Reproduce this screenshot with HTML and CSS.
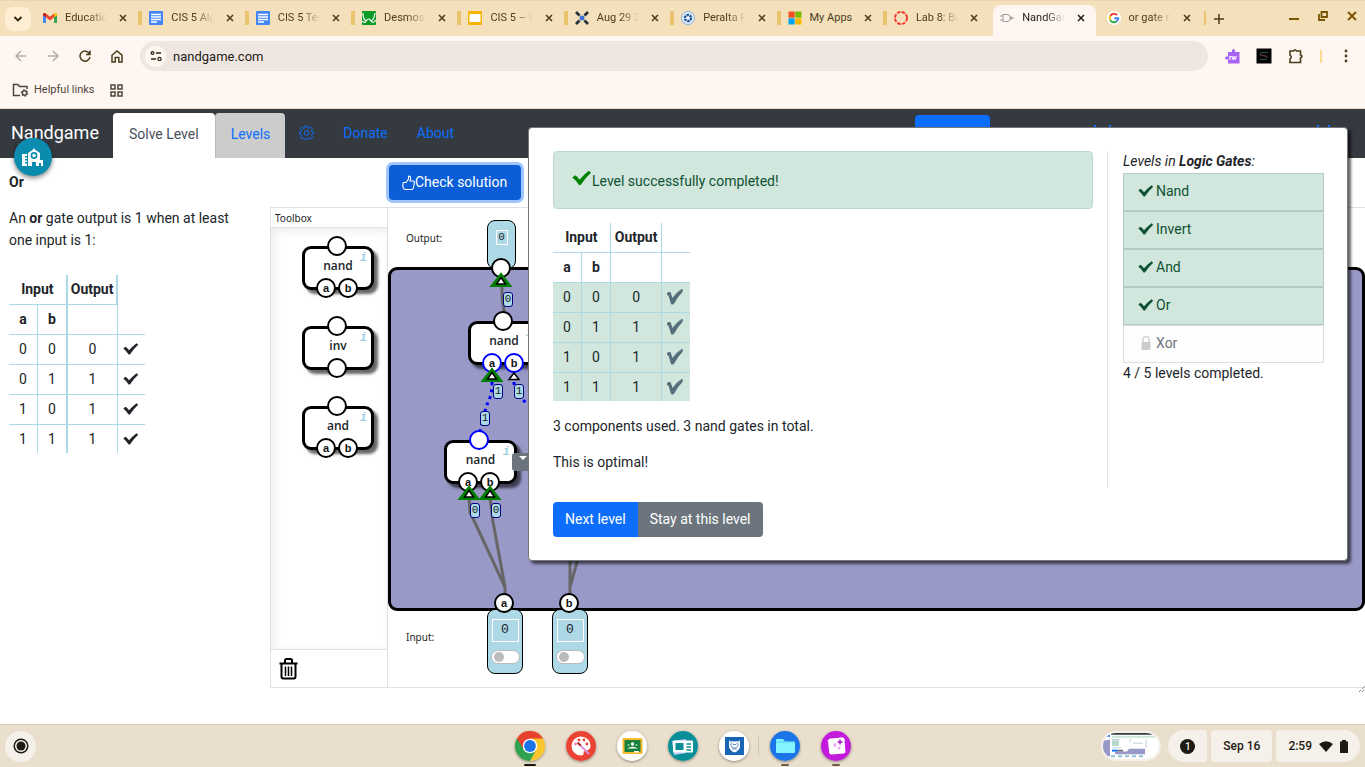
FILE: index.html
```html
<!DOCTYPE html>
<html lang="en">
<head>
<meta charset="utf-8">
<title>NandGame</title>
<link rel="stylesheet" href="styles.css">
</head>
<body>
<svg class="defs" aria-hidden="true">
  <symbol id="x" viewBox="0 0 8 8"><path d="M1 1l6 6M7 1l-6 6" stroke="currentColor" stroke-width="1.5" fill="none"/></symbol>
  <symbol id="check" viewBox="0 0 16 12"><path d="M.3 5.500L2.500 3.800Q4.500 5 6 7.300Q9.500 3.300 13.500 .2L15.200 1.800Q10.500 6 6.900 11.500L5.600 11.500Q3.500 8 .3 5.500Z" fill="currentColor"/></symbol>
  <symbol id="mark" viewBox="0 0 16 16"><path d="M0 4Q1.500 2.500 3.500 3L5.500 9Q9.500 3 14.500 0L16 .5L15.500 3Q10.500 8 7.500 14Q6 16.500 4 15L1.800 7.500Q1.200 5.500 0 6Z" fill="#546e7a"/><path d="M6.500 8Q10 3 15 .7" stroke="#7b93a0" stroke-width=".7" fill="none"/></symbol>
  <symbol id="doc" viewBox="0 0 14 14"><rect width="14" height="14" rx="1" fill="#4285f4"/><path d="M2 3.500h10M2 6h10M2 8.500h10M2 11h6" stroke="#fff" stroke-width="1.300"/></symbol>
  <symbol id="tri" viewBox="0 0 24 17"><path d="M12 4L20 14.300H4Z" fill="#fff" stroke="green" stroke-width="3.500"/><path d="M12 6.500L16.500 13H7.500Z" fill="#fff" stroke="#000" stroke-width="1.500"/></symbol>
</svg>

<header class="browser">
  <div class="tabstrip">
    <button class="tab-search" aria-label="Search tabs"><svg width="10" height="6" viewBox="0 0 10 6"><path d="M1.500 1l3.500 3.500L8.500 1" fill="none" stroke="#2b2412" stroke-width="1.800"/></svg></button>
    <div class="tabs">
      <div class="tab"><svg class="fav" viewBox="0 0 14 14"><path d="M0 12V3l3 2.500V12z" fill="#4285f4"/><path d="M14 12V3l-3 2.500V12z" fill="#34a853"/><path d="M3 2.500L7 5.700l4-3.200v3.700L7 9.500 3 6.200z" fill="#ea4335"/><path d="M0 3.200Q.2 1 3 2.500v3.700L0 4.500z" fill="#c5221f"/><path d="M14 3.200Q13.800 1 11 2.500v3.700l3-1.700z" fill="#fbbc04"/></svg><span class="tab-title">Education</span><button class="close" aria-label="Close"><svg width="8" height="8"><use href="#x"/></svg></button></div>
      <div class="tab"><svg class="fav"><use href="#doc"/></svg><span class="tab-title">CIS 5 Algorithms</span><button class="close" aria-label="Close"><svg width="8" height="8"><use href="#x"/></svg></button></div>
      <div class="tab"><svg class="fav"><use href="#doc"/></svg><span class="tab-title">CIS 5 Terms</span><button class="close" aria-label="Close"><svg width="8" height="8"><use href="#x"/></svg></button></div>
      <div class="tab"><svg class="fav" viewBox="0 0 14 14"><rect width="14" height="14" rx="1" fill="#0a9a25"/><path d="M1 2Q1 8 4 10Q7 6 9 10Q12 9 13 2M0 10Q3 13 4 10M9 10Q11 13 14 9" fill="none" stroke="#fff" stroke-width="1.200"/></svg><span class="tab-title">Desmos</span><button class="close" aria-label="Close"><svg width="8" height="8"><use href="#x"/></svg></button></div>
      <div class="tab"><svg class="fav" viewBox="0 0 14 14"><rect width="14" height="14" rx="1" fill="#f6b400"/><rect x="1.500" y="3" width="11" height="8" fill="#fff"/></svg><span class="tab-title">CIS 5 – 9/16</span><button class="close" aria-label="Close"><svg width="8" height="8"><use href="#x"/></svg></button></div>
      <div class="tab"><svg class="fav" viewBox="0 0 14 14"><path d="M1 1l3.500 3.500M13 1L9.500 4.500M1 13l3.500-3.500M13 13L9.500 9.500" stroke="#27313f" stroke-width="2.800"/><path d="M4 4l6 6M10 4l-6 6" stroke="#6b7280" stroke-width="1"/><circle cx="7" cy="7" r="2.500" fill="#3f73d8"/></svg><span class="tab-title">Aug 29 3:00</span><button class="close" aria-label="Close"><svg width="8" height="8"><use href="#x"/></svg></button></div>
      <div class="tab"><svg class="fav" viewBox="0 0 14 14"><circle cx="7" cy="7" r="6.600" fill="#dce9f7" stroke="#7fa9d8" stroke-width=".8"/><circle cx="7" cy="7" r="3" fill="#fff" stroke="#174f99" stroke-width="2.400" stroke-dasharray="2.300 .8"/></svg><span class="tab-title">Peralta Portal</span><button class="close" aria-label="Close"><svg width="8" height="8"><use href="#x"/></svg></button></div>
      <div class="tab"><svg class="fav" viewBox="0 0 14 14"><path d="M.5 .5H6.700V6.700H.5z" fill="#f25022"/><path d="M7.300 .5h6.200v6.200H7.300z" fill="#7fba00"/><path d="M.5 7.300h6.200v6.200H.5z" fill="#00a4ef"/><path d="M7.300 7.300h6.200v6.200H7.300z" fill="#ffb900"/></svg><span class="tab-title whole">My Apps</span><button class="close" aria-label="Close"><svg width="8" height="8"><use href="#x"/></svg></button></div>
      <div class="tab no-sep"><svg class="fav" viewBox="0 0 14 14"><circle cx="7" cy="7" r="6" fill="none" stroke="#f0342c" stroke-width="1.900" stroke-dasharray="3.500 1.200"/></svg><span class="tab-title">Lab 8: Binary</span><button class="close" aria-label="Close"><svg width="8" height="8"><use href="#x"/></svg></button></div>
      <div class="tab no-sep active"><svg class="fav" viewBox="0 0 14 14"><path d="M3 3.500h4a3.500 3.500 0 010 7H3zM0 5h3M0 9h3M11 7h3" fill="none" stroke="#999" stroke-width="1"/><circle cx="11" cy="7" r="1" fill="none" stroke="#999"/></svg><span class="tab-title">NandGame</span><button class="close" aria-label="Close"><svg width="8" height="8"><use href="#x"/></svg></button></div>
      <div class="tab"><svg class="fav" viewBox="0 0 14 14"><circle cx="7" cy="7" r="7" fill="#fff"/><g fill="none" stroke-width="2"><path d="M10.200 4.100A4.300 4.300 0 003.300 4.900" stroke="#ea4335"/><path d="M3.300 4.900A4.300 4.300 0 003.300 9.200" stroke="#fbbc05"/><path d="M3.300 9.200A4.300 4.300 0 009.700 10.300" stroke="#34a853"/><path d="M9.700 10.300A4.300 4.300 0 0011.200 7.200H7.200" stroke="#4285f4"/></g></svg><span class="tab-title">or gate nand</span><button class="close" aria-label="Close"><svg width="8" height="8"><use href="#x"/></svg></button></div>
    </div>
    <button class="icon-btn" aria-label="New tab"><svg width="10" height="10"><path d="M5 0v10M0 5h10" stroke="#4b3d1c" stroke-width="1.500"/></svg></button>
    <div class="window-controls">
      <button class="icon-btn" aria-label="Minimize"><svg width="10" height="10"><path d="M0 8h10" stroke="#7a5600" stroke-width="2"/></svg></button>
      <button class="icon-btn" aria-label="Restore"><svg width="10" height="10"><path d="M3.500 1h5.500v5H3.500zM1 3v6h6" fill="none" stroke="#7a5600" stroke-width="1.800"/></svg></button>
      <button class="icon-btn" aria-label="Close window"><svg width="10" height="10"><path d="M1 1l8 8M9 1L1 9" stroke="#7a5600" stroke-width="1.900"/></svg></button>
    </div>
  </div>
  <div class="toolbar">
    <button class="icon-btn" aria-label="Back"><svg width="12" height="12"><path d="M11 6H1.500M6 1L1 6l5 5" fill="none" stroke="#b5aba4" stroke-width="1.500"/></svg></button>
    <button class="icon-btn" aria-label="Forward"><svg width="12" height="12"><path d="M1 6h9.500M6 1l5 5-5 5" fill="none" stroke="#b5aba4" stroke-width="1.500"/></svg></button>
    <button class="icon-btn" aria-label="Reload"><svg width="12" height="12"><path d="M10.300 3.500A5 5 0 1011 6.800M11 .5v4H7" fill="none" stroke="#4b3d1c" stroke-width="1.500"/></svg></button>
    <button class="icon-btn" aria-label="Home"><svg width="12" height="13"><path d="M1 5.200L6 1l5 4.200V12H7.800V7.500H4.200V12H1z" fill="none" stroke="#4b3d1c" stroke-width="1.500"/></svg></button>
    <label class="omnibox"><span class="site"><svg width="12" height="10"><path d="M6 2h5M1 8h5" stroke="#2b2412" stroke-width="1.400"/><circle cx="2.500" cy="2" r="1.400" fill="none" stroke="#2b2412" stroke-width="1.200"/><circle cx="9.500" cy="8" r="1.600" fill="none" stroke="#2b2412" stroke-width="1.200"/></svg></span><input type="text" value="nandgame.com" aria-label="Address"></label>
    <div class="extensions">
      <button class="icon-btn" aria-label="Read and write"><svg width="16" height="16"><path d="M4 4h4V2.500a1.500 1.500 0 113 0V4h4.500v11.500H4v-4H2.500a1.500 1.500 0 110-3H4z" fill="#a862f5"/><text x="5" y="12" class="rw">rw</text></svg></button>
      <button class="icon-btn" aria-label="Extension"><svg width="16" height="16"><rect x=".5" y=".5" width="15" height="15" fill="#050505"/><path d="M12 4.500H5l-1 2 7 2-1 3H4" fill="none" stroke="#2c4c4e"/><path d="M4 7l7 1.500" stroke="#6a2a34"/></svg></button>
      <button class="icon-btn" aria-label="Extensions"><svg width="16" height="16"><path d="M2 3h3.500q1.500-2.500 3 0H12.500v4q3 1 0 3v4.500H2V11q2.500-2 0-4z" fill="none" stroke="#4b3d1c" stroke-width="1.600"/></svg></button>
      <span class="divider"></span>
      <button class="icon-btn" aria-label="Menu"><svg width="16" height="16"><g fill="#4b3d1c"><circle cx="8" cy="3" r="1.400"/><circle cx="8" cy="8" r="1.400"/><circle cx="8" cy="13" r="1.400"/></g></svg></button>
    </div>
  </div>
  <div class="bookmarks">
    <a href="#"><svg width="17" height="14"><path d="M8 12.500H1.500V1.500H6L7.500 3.500H15V6" fill="none" stroke="#4b4639" stroke-width="1.500"/><circle cx="12.500" cy="10" r="2.200" fill="none" stroke="#4b4639" stroke-width="1.500"/><circle cx="12.500" cy="10" r="3.400" fill="none" stroke="#4b4639" stroke-width="1" stroke-dasharray="1.500 2.060"/></svg>Helpful links</a>
    <button class="icon-btn" aria-label="Apps"><svg width="13" height="13"><path d="M1 1h4v4H1zM8 1h4v4H8zM1 8h4v4H1zM8 8h4v4H8z" fill="none" stroke="#4b4639" stroke-width="1.500"/></svg></button>
  </div>
</header>

<nav class="navbar">
  <a class="brand" href="#">Nandgame</a>
  <a class="nav-tab current" href="#">Solve Level</a>
  <a class="nav-tab other" href="#">Levels</a>
  <a class="nav-link gear" href="#" aria-label="Settings"><svg width="15" height="15" viewBox="0 0 15 15" fill="none" stroke="#0d6efd"><path d="M6.300 1h2.400l.4 1.800 1.200.5 1.600-1 1.600 1.600-1 1.600.5 1.200 1.500.3v2l-1.500.4-.5 1.200 1 1.600-1.600 1.600-1.600-1-1.200.5-.4 1.500H6.300l-.4-1.500-1.200-.5-1.600 1-1.600-1.600 1-1.600L2 9.400.5 9V7L2 6.700l.5-1.200-1-1.600 1.600-1.600 1.600 1 1.200-.5z"/><circle cx="7.500" cy="7.800" r="2.300"/></svg></a>
  <a class="nav-link" href="#">Donate</a>
  <a class="nav-link" href="#">About</a>
  <div class="nav-right"><button class="nav-cta" aria-label="Account"></button><svg class="nav-marks" width="240" height="2"><path d="M0 1h2M15 1h2M223 1h2M234 1h2" stroke="#0d6efd" stroke-width="2"/></svg></div>
  <button class="helper" aria-label="School tools"><svg width="22" height="19" viewBox="0 0 22 19"><path d="M0 6h5v2H3v1.500h2v1.500H3v1.500h2V14H3v1.500h2V18H0z" fill="#fff"/><path d="M6 18V5L10.500 2L12 0l1.500 2L18 5v7h3v6h-2v-3h-2v3h-3v-4h-4v4z" fill="#fff"/><circle cx="12" cy="7.500" r="2.600" fill="#fff" stroke="#0b8bad" stroke-width="1.600"/></svg></button>
</nav>

<main class="main">
  <section class="lesson">
    <h1>Or</h1>
    <p>An <b>or</b> gate output is 1 when at least one input is 1:</p>
    <table class="truth thick">
      <tr><th colspan="2">Input</th><th>Output</th><td class="blank"></td></tr>
      <tr><th>a</th><th>b</th><th></th><td></td></tr>
      <tr><td>0</td><td>0</td><td>0</td><td><svg width="16" height="12"><use href="#check"/></svg></td></tr>
      <tr><td>0</td><td>1</td><td>1</td><td><svg width="16" height="12"><use href="#check"/></svg></td></tr>
      <tr><td>1</td><td>0</td><td>1</td><td><svg width="16" height="12"><use href="#check"/></svg></td></tr>
      <tr><td>1</td><td>1</td><td>1</td><td><svg width="16" height="12"><use href="#check"/></svg></td></tr>
    </table>
  </section>

  <section class="work">
    <div class="actions"><button class="btn check-btn"><svg width="13" height="16" viewBox="0 0 13 16"><path d="M1.500 7.500H4L6.500 4V1.200Q9 .8 8.500 4L8 6h3.200q1.300.2 1.200 1.500l-1 5.500q-.3 1.500-1.800 1.500H3.500q-2 0-2.500-2.500Q.5 9 1.500 7.500z" fill="none" stroke="#fff" stroke-width="1.100"/></svg>Check solution</button></div>
    <div class="workspace">
      <aside class="toolbox">
        <div class="tb-title">Toolbox</div>
        <div class="tb-body">
          <div class="gate"><span class="pin top"></span>nand<i>i</i><span class="pin left">a</span><span class="pin right">b</span></div>
          <div class="gate"><span class="pin top"></span>inv<i>i</i><span class="pin mid"></span></div>
          <div class="gate"><span class="pin top"></span>and<i>i</i><span class="pin left">a</span><span class="pin right">b</span></div>
        </div>
        <div class="tb-trash"><button class="icon-btn" aria-label="Delete"><svg width="19" height="22" viewBox="0 0 19 22"><path d="M.5 5.500h18M6 5V2.500q0-1.500 1.500-1.500h4Q13 1 13 2.500V5M2.500 6v12.500q0 2 2 2h10q2 0 2-2V6" fill="none" stroke="#000" stroke-width="2"/><path d="M6.500 8.500v9.500M9.500 8.500v9.500M12.500 8.500v9.500" stroke="#000" stroke-width="1.500"/></svg></button></div>
      </aside>
      <div class="canvas">
        <div class="band band-out">Output:</div>
        <div class="board"></div>
        <div class="band band-in">Input:</div>
        <svg class="layer">
          <g transform="translate(-388 -208)" fill="none" stroke="#666" stroke-width="3">
            <path d="M502 286v12l2 12v11M469 498l1 14 35 75v12M490 498l3 24 12 65M570 555v44M579 555l-9 32"/>
            <path d="M492 382q0 13-4 20-5 14-8 30M514 382q0 12 14 22" stroke="#00f" stroke-dasharray="3 4"/>
          </g>
        </svg>
        <div class="terminal out"><span class="value">0</span></div>
        <span class="pin pin-out"></span>
        <div class="gate gate-1"><span class="pin top"></span>nand<i>i</i><span class="pin left on">a</span><span class="pin right on">b</span></div>
        <div class="gate gate-2"><span class="pin top on"></span>nand<i>i</i><span class="pin left">a</span><span class="pin right">b</span></div>
        <div class="terminal in-a"><span class="value">0</span><input type="checkbox" aria-label="Input a"></div>
        <div class="terminal in-b"><span class="value">0</span><input type="checkbox" aria-label="Input b"></div>
        <span class="pin pin-a">a</span>
        <span class="pin pin-b">b</span>
        <svg class="layer">
          <g transform="translate(-388 -208)">
            <use href="#tri" x="489" y="271" width="24" height="17"/>
            <use href="#tri" x="480" y="366" width="24" height="17"/>
            <use href="#tri" x="457" y="484" width="24" height="17"/>
            <use href="#tri" x="478" y="484" width="24" height="17"/>
            <path d="M514 373l5 6.500h-10z" fill="#fff" stroke="#000" stroke-width="1.500"/>
          </g>
        </svg>
        <span class="bit b1">0</span>
        <span class="bit b2">1</span>
        <span class="bit b3">1</span>
        <span class="bit b4">1</span>
        <span class="bit b5">0</span>
        <span class="bit b6">0</span>
        <button class="gate-menu" aria-label="Gate menu"><svg width="8" height="4"><path d="M0 0h8L4 4z" fill="#fff"/></svg></button>
      </div>
    </div>
  </section>
  <svg class="resizer" width="6" height="6"><path d="M0 6l6-6M3 6l3-3" stroke="#444" stroke-dasharray="1 1"/></svg>
</main>

<div class="dialog" role="dialog" aria-label="Level completed">
  <div class="result">
    <div class="alert"><svg width="20" height="16" viewBox="0 0 16 12"><use href="#check"/></svg>Level successfully completed!</div>
    <table class="truth passed">
      <tr><th colspan="2">Input</th><th>Output</th><td></td></tr>
      <tr><th>a</th><th>b</th><th></th><td></td></tr>
      <tr class="ok"><td>0</td><td>0</td><td>0</td><td><svg width="16" height="16"><use href="#mark"/></svg></td></tr>
      <tr class="ok"><td>0</td><td>1</td><td>1</td><td><svg width="16" height="16"><use href="#mark"/></svg></td></tr>
      <tr class="ok"><td>1</td><td>0</td><td>1</td><td><svg width="16" height="16"><use href="#mark"/></svg></td></tr>
      <tr class="ok"><td>1</td><td>1</td><td>1</td><td><svg width="16" height="16"><use href="#mark"/></svg></td></tr>
    </table>
    <p>3 components used. 3 nand gates in total.</p>
    <p>This is optimal!</p>
    <div class="btn-group"><button class="btn primary">Next level</button><button class="btn secondary">Stay at this level</button></div>
  </div>
  <aside class="levels">
    <div><em>Levels in <b>Logic Gates</b>:</em></div>
    <ul>
      <li><svg width="16" height="12"><use href="#check"/></svg>Nand</li>
      <li><svg width="16" height="12"><use href="#check"/></svg>Invert</li>
      <li><svg width="16" height="12"><use href="#check"/></svg>And</li>
      <li><svg width="16" height="12"><use href="#check"/></svg>Or</li>
      <li class="locked"><svg width="16" height="14"><path d="M5 7V3.500q0-3 3-3t3 3V7" fill="none" stroke="#d0d0d0" stroke-width="1.500"/><rect x="3.500" y="6" width="9" height="8" rx="1" fill="#ccc"/></svg>Xor</li>
    </ul>
    <div>4 / 5 levels completed.</div>
  </aside>
</div>

<footer class="shelf">
  <div class="shelf-side"><button class="launcher" aria-label="Launcher"><svg width="16" height="16"><circle cx="8" cy="8" r="6.800" fill="none" stroke="#1d1a12" stroke-width="1.500"/><circle cx="8" cy="8" r="4.500" fill="#1d1a12"/></svg></button></div>
  <div class="apps">
    <button class="app run now" aria-label="Chrome"><svg viewBox="0 0 30 30"><circle cx="15" cy="15" r="15" fill="#fbc52d"/><path d="M15 15L2 7.500A15 15 0 0015 30l6.300-11.400z" fill="#2fa350"/><path d="M2 7.500A15 15 0 0128 7.500H15L8.700 18.600z" fill="#e8402f"/><circle cx="15" cy="15" r="7.300" fill="#fff"/><circle cx="15" cy="15" r="5.900" fill="#1a73e8"/></svg></button>
    <button class="app" aria-label="Canvas"><svg viewBox="0 0 30 30"><circle cx="15" cy="15" r="15" fill="#ea4335"/><path d="M15 5.500a9.500 9.500 0 100 19q3 0 2.500-2.500-.3-2 2-2.300 5-.5 5-4.700 0-8.500-9.500-9.500z" fill="#fff"/><circle cx="9.500" cy="13" r="1.400" fill="#ea7ac4"/><circle cx="13" cy="9" r="1.400" fill="#ea4335"/><circle cx="18" cy="9" r="1.400" fill="#ea4335"/><circle cx="21" cy="13" r="1.400" fill="#ea4335"/><path d="M13 13l10 10" stroke="#e08be0" stroke-width="2"/><path d="M11.500 11.500l3 3" stroke="#b3261e" stroke-width="2"/></svg></button>
    <button class="app" aria-label="Classroom"><svg viewBox="0 0 30 30"><circle cx="15" cy="15" r="15" fill="#fff"/><rect x="5.500" y="7" width="20" height="16" rx="1" fill="#f9bb2d"/><rect x="7.500" y="9" width="16" height="12" fill="#188038"/><circle cx="15.500" cy="13" r="1.700" fill="#fff"/><circle cx="11.500" cy="14" r="1.100" fill="#8fd0a4"/><circle cx="19.500" cy="14" r="1.100" fill="#8fd0a4"/><path d="M10 17.500q5.500-3.500 11 0z" fill="#fff"/><rect x="17" y="20" width="5" height="1.500" fill="#fff"/></svg></button>
    <button class="app" aria-label="Screencast"><svg viewBox="0 0 30 30"><circle cx="15" cy="15" r="15" fill="#0a8f98"/><path d="M4 10l14-2v14l-12 2z" fill="#b9c9f5"/><rect x="5" y="9.500" width="20" height="12" rx="1" fill="#fff"/><rect x="7.500" y="12" width="8" height="7" fill="#0a8f98"/><path d="M18.500 13h4.500M18.500 16h4.500M18.500 19h4.500" stroke="#0a8f98" stroke-width="1.400"/></svg></button>
    <button class="app" aria-label="Securly"><svg viewBox="0 0 30 30"><circle cx="15" cy="15" r="15" fill="#fff"/><rect x="6" y="6" width="19" height="18" fill="#1765b3"/><path d="M10 9.500q5.500 2 11 0v6q-.5 4-5.500 6-5-2-5.500-6z" fill="#fff"/><path d="M11 10.500l3 3h3l3-3M11.500 13l2 4h4l2-4M13.500 19l2-2 2 2" fill="none" stroke="#1765b3" stroke-width=".7"/></svg></button>
    <button class="app run sep" aria-label="Files"><svg viewBox="0 0 30 30"><circle cx="15" cy="15" r="15" fill="#1b74e8"/><path d="M6 9q0-1 1-1h6l2 2.500h9q1 0 1 1V21q0 1-1 1H7q-1 0-1-1z" fill="#82f3ff"/><path d="M6 11h19" stroke="#4fc3ee" stroke-width=".8"/></svg></button>
    <button class="app run" aria-label="Gallery"><svg viewBox="0 0 30 30"><circle cx="15" cy="15" r="15" fill="#c31bdc"/><path d="M6.500 9l14-2.500 2 15-14 1.500z" fill="#f9b7f3"/><rect x="8" y="7" width="16" height="16" rx="2" fill="#fff" transform="rotate(-4 16 15)"/><path d="M19 8.500v5M16.500 11h5" stroke="#a01bc0" stroke-width="1.500"/><path d="M14 12v4M12 14h4M18 15.500v3M16.500 17h3" stroke="#e59af0" stroke-width="1.200"/></svg></button>
  </div>
  <div class="shelf-side status">
    <button class="thumb" aria-label="Recent capture"><svg viewBox="0 0 56 28" preserveAspectRatio="none"><rect width="56" height="28" fill="#fff"/><path d="M8 0h48v2H8z" fill="#35383f"/><path d="M0 8q3 0 7-1v18H0zM26 17h16v6H12v-3h12z" fill="#9797c8"/><path d="M9 3h46v2H9z" fill="#cbe5d7"/><rect x="9" y="8" width="7" height="6" fill="#b5d8cb"/><path d="M9 7h8M30 11h10M43 7v9M27 6v4M9 16h9" stroke="#a9c3cd" stroke-width=".8"/><rect x="3" y="2" width="4" height="2" fill="#0d6efd"/><rect x="9" y="18" width="5" height="2" fill="#0d6efd"/><path d="M14 19h6" stroke="#6c757d" stroke-width="2"/><path d="M8 25h32" stroke="#8fc0d6" stroke-width="2" stroke-dasharray="4 3"/></svg></button>
    <button class="pill first" aria-label="Notifications"><span class="badge">1</span></button>
    <button class="pill">Sep 16</button>
    <button class="pill last">2:59<svg width="14" height="11"><path d="M0 3Q7-2.500 14 3L7 11z" fill="#1d1a12"/></svg><svg width="8" height="13"><path d="M2 0h4v1.500h2V13H0V1.500h2z" fill="#1d1a12"/></svg></button>
  </div>
</footer>
</body>
</html>
```
FILE: styles.css
```css
* { box-sizing: border-box; }
body {
  margin: 0;
  min-height: 100vh;
  display: flex;
  flex-direction: column;
  position: relative;
  font: 14px/22px Roboto, sans-serif;
  color: #212529;
  background: #fff;
}
button { font: inherit; border: 0; padding: 0; background: none; color: inherit; }
a { text-decoration: none; color: #0d6efd; }
svg { display: block; flex: none; }
.defs { position: absolute; width: 0; height: 0; }

/* Browser frame */
.browser { background: #fff6f1; border-bottom: 1px solid #e8dcc6; }
.tabstrip {
  height: 36px;
  display: flex;
  align-items: center;
  background: #f4e0bb;
  border-top: 1px solid #ead5b0;
  padding: 0 5px;
}
.tab-search {
  width: 26px;
  height: 24px;
  margin-right: 5px;
  display: grid;
  place-items: center;
  background: #feeed4;
  border-radius: 8px;
}
.tabs { display: flex; flex: 0 1 1170px; min-width: 0; align-self: stretch; }
.tab {
  flex: 1 1 0;
  min-width: 0;
  display: flex;
  align-items: center;
  gap: 8px;
  padding: 0 11px 2px 7px;
  position: relative;
  font-size: 11px;
  color: #4b3d1c;
}
.tab::after {
  content: "";
  position: absolute;
  right: 0;
  top: 10px;
  width: 4px;
  height: 14px;
  background: #e9c46c;
}
.tab:last-child::after { width: 2px; }
.tab.no-sep::after { display: none; }
.fav { width: 14px; height: 14px; }
.tab-title {
  flex: 1;
  min-width: 0;
  overflow: hidden;
  white-space: nowrap;
  -webkit-mask-image: linear-gradient(to right, #000 55%, transparent);
  mask-image: linear-gradient(to right, #000 55%, transparent);
}
.tab-title.whole { -webkit-mask-image: none; mask-image: none; }
.close { padding: 4px; }
.tab.active { color: #1f1b10; }
.tab.active::before {
  content: "";
  position: absolute;
  z-index: 0;
  left: 0;
  right: 4px;
  top: 4px;
  bottom: 0;
  background: #fff6f1;
  border-radius: 8px 8px 0 0;
}
.tab.active > * { position: relative; }
.icon-btn { min-width: 16px; display: grid; place-items: center; }
.tabstrip > .icon-btn { margin-left: 5px; }
.window-controls { margin-left: auto; display: flex; gap: 13px; padding-bottom: 5px; }
.toolbar { display: flex; align-items: center; gap: 16px; padding: 5px 11px 5px 13px; }
.omnibox {
  flex: 1;
  height: 30px;
  display: flex;
  align-items: center;
  gap: 7px;
  margin-left: -1px;
  padding-left: 5px;
  border-radius: 15px;
  background: #efe6e2;
}
.site { width: 21px; height: 21px; border-radius: 50%; background: #fff6f1; display: grid; place-items: center; }
.omnibox input { flex: 1; min-width: 0; border: 0; padding: 2px 0 0; background: none; color: #1f1b16; font: 13px/20px Roboto, sans-serif; }
.extensions { display: flex; align-items: center; gap: 16px; }
.extensions .divider { width: 2px; height: 13px; background: #fbdc94; }
.rw { font: bold 7px Roboto, sans-serif; fill: #fff; }
.bookmarks { height: 32px; display: flex; align-items: center; gap: 14px; padding: 0 12px 4px; }
.bookmarks a { display: flex; align-items: center; gap: 5px; color: #4b4639; font-size: 11px; }

/* Site navigation */
.navbar { position: relative; height: 49px; display: flex; align-items: stretch; background: #343a40; padding-top: 4px; }
.brand { padding: 8px 14px 0 11px; font-size: 18px; line-height: 24px; color: #fff; }
.nav-tab { padding: 10px 16px; border-radius: 4px 4px 0 0; }
.nav-tab.current { background: #fff; color: #495057; }
.nav-tab.other { background: #ccc; border-left: 1px solid #bbb; padding: 10px 15px; }
.nav-link { padding: 9px 15px 0 14px; }
.nav-link.gear { padding-top: 12px; }
.nav-right { margin: 2px 31px 0 auto; display: flex; }
.nav-cta { width: 75px; height: 34px; background: #0d6efd; border-radius: 4px; }
.nav-marks { margin: 10px 0 0 104px; }
.helper {
  position: absolute;
  left: 14px;
  top: 29px;
  z-index: 2;
  width: 38px;
  height: 38px;
  border-radius: 50%;
  display: grid;
  place-items: center;
  background: #0b8bad;
  box-shadow: 0 2px 5px rgba(0, 0, 0, .5);
}

/* Page */
.main { flex: 1; display: flex; position: relative; padding-bottom: 36px; }
.lesson { flex: 0 0 270px; padding: 13px 30px 0 9px; }
h1 { margin: 0 0 14px; font-size: 14px; line-height: 22px; }
p { margin: 0 0 14px; }
.lesson p { margin-bottom: 24px; }
.truth { border-collapse: collapse; text-align: center; line-height: 20px; }
.truth th, .truth td { height: 30px; min-width: 28px; padding: 0 10px; border: 1px solid #add8e6; }
.truth th:nth-child(3), .truth td:nth-child(3), .truth tr:first-child th:nth-child(2) { padding: 0 4px; }
.truth td:last-child { padding: 0 6px 0 5px; }
.truth tr:first-child > * { border-top: 0; height: 29px; }
.truth tr:last-child > * { border-bottom: 0; height: 29px; }
.truth tr > :first-child { border-left: 0; }
.truth tr > :last-child { border-right: 0; }
.thick td:nth-child(3), .thick th:nth-child(3), .thick tr:first-child th:nth-child(2) { border-left-width: 2px; padding: 0 3px; }
.thick .blank { border-bottom: 0; }
.thick tr:nth-child(2) td { border-top: 0; }
.passed .ok { background: #d1e7dd; }

.work { flex: 1; min-width: 0; display: flex; flex-direction: column; }
.actions { padding: 7px 0 7px 119px; }
.btn { padding: 7px 12px; line-height: 21px; color: #fff; border-radius: 4px; }
.check-btn {
  display: flex;
  align-items: center;
  padding: 7px 14px 7px 13px;
  background: #0b5ed7;
  box-shadow: 0 0 0 3px #9ec5fe;
}
.workspace { flex: 1; display: flex; border: 1px solid #dee2e6; border-right: 0; font: 10px/18px "Noto Sans", "Open Sans", sans-serif; }
.toolbox { flex: 0 0 117px; display: flex; flex-direction: column; border-right: 1px solid #dee2e6; }
.tb-title { padding: 1px 4px 0; border-bottom: 1px solid #dee2e6; }
.tb-body { flex: 1; display: flex; flex-direction: column; gap: 36px; padding: 18px 0 0 31px; box-shadow: inset 3px 3px 10px rgba(0, 0, 0, .08); }
.tb-trash { height: 38px; padding: 7px 8px; display: flex; border-top: 1px solid #dee2e6; }
.gate {
  position: relative;
  width: 72px;
  height: 44px;
  padding-top: 8px;
  border: 3px solid #000;
  border-radius: 9px;
  background: #fff;
  box-shadow: 4px 4px 3px rgba(0, 0, 0, .6);
  text-align: center;
  font: 600 12px/18px "Open Sans", "Noto Sans", sans-serif;
}
.gate i { position: absolute; right: 4px; top: 0; color: #9fd0e2; font: italic bold 12px/18px "Liberation Mono", monospace; }
.pin {
  position: absolute;
  width: 20px;
  height: 20px;
  border: 2px solid #000;
  border-radius: 50%;
  background: #fff;
  color: #111;
  font: bold 11px/16px "Liberation Sans", sans-serif;
  text-align: center;
}
.pin.on { border-color: #00f; }
.pin.top { left: 22px; top: -13px; }
.pin.mid { left: 22px; top: 29px; }
.pin.left { left: 11px; top: 29px; }
.pin.right { left: 33px; top: 29px; }

/* Circuit canvas */
.canvas { flex: 1; min-width: 0; position: relative; display: flex; flex-direction: column; overflow: hidden; }
.band { padding-left: 18px; }
.band-out { height: 59px; padding-top: 21px; }
.band-in { height: 76px; padding-top: 17px; }
.board { flex: 1; border: 3px solid #000; border-radius: 9px; background: #9999c8; }
.layer { position: absolute; inset: 0; width: 100%; height: 100%; pointer-events: none; }
.terminal {
  position: absolute;
  width: 36px;
  height: 65px;
  padding-top: 9px;
  display: flex;
  flex-direction: column;
  align-items: center;
  gap: 8px;
  background: #add8e6;
  border: 1px solid #000;
  border-radius: 8px;
}
.value { width: 27px; height: 23px; border: 1px solid #fff; text-align: center; font: 13px/20px "Liberation Mono", monospace; }
.terminal.out { left: 99px; top: 12px; width: 29px; height: 49px; }
.out .value { width: 12px; height: 15px; font-size: 11px; line-height: 13px; }
.in-a { left: 99px; top: 401px; }
.in-b { left: 164px; top: 401px; }
.terminal input { appearance: none; margin: 0; width: 29px; height: 14px; border: 1px solid #bbb; border-radius: 7px; background: #fff; }
.terminal input::before { content: ""; display: block; width: 10px; height: 10px; margin: 1px 2px; border-radius: 50%; background: #bbb; }
.pin-out { left: 103px; top: 50px; }
.pin-a { left: 106px; top: 385px; }
.pin-b { left: 171px; top: 385px; }
.canvas .gate { position: absolute; }
.gate-1 { left: 80px; top: 113px; }
.gate-2 { left: 56px; top: 232px; width: 73px; }
.bit {
  position: absolute;
  width: 10px;
  height: 15px;
  border: 1px solid #000080;
  border-radius: 3px;
  background: #add8e6;
  text-align: center;
  font: 11px/12px "Liberation Mono", monospace;
}
.b1 { left: 115px; top: 84px; }
.b2 { left: 105px; top: 176px; }
.b3 { left: 126px; top: 176px; }
.b4 { left: 92px; top: 203px; }
.b5 { left: 82px; top: 295px; }
.b6 { left: 103px; top: 295px; }
.gate-menu { position: absolute; left: 124px; top: 245px; width: 22px; height: 18px; padding: 3px 7px; border-radius: 3px; background: #6c757d; display: flex; }
.resizer { position: absolute; right: 0; bottom: 32px; }

/* Completion dialog */
.dialog {
  position: absolute;
  z-index: 3;
  top: 127px;
  left: 528px;
  right: 17px;
  display: flex;
  gap: 14px;
  padding: 23px 23px 23px 24px;
  background: #fff;
  border: 1px solid #777;
  border-radius: 4px;
  box-shadow: 3px 3px 3px rgba(0, 0, 0, .6);
}
.result { flex: 1; min-width: 0; }
.alert { display: flex; align-items: center; height: 58px; margin-bottom: 14px; padding: 2px 18px 0; border: 1px solid #badbcc; border-radius: 4px; background: #d1e7dd; color: #0f5132; }
.alert svg { color: green; margin-bottom: 6px; }
.passed { margin-bottom: 14px; }
.btn-group { display: flex; margin-top: 29px; }
.primary { background: #0d6efd; border-radius: 4px 0 0 4px; }
.secondary { background: #6c757d; border-radius: 0 4px 4px 0; }
.levels { flex: 0 0 217px; align-self: flex-start; min-height: 337px; padding-left: 15px; border-left: 1px solid #dee2e6; line-height: 21px; }
.levels ul { list-style: none; margin: 1px 0 0; padding: 0; }
.levels li { height: 38px; display: flex; align-items: center; gap: 2px; padding: 0 14px 2px; border: 1px solid #b3cbc0; background: #d1e7dd; color: #0f5132; }
.levels li.locked { background: #fdfdfd; border-color: #ddd; color: #6c757d; }

/* Shelf */
.shelf { height: 43px; display: flex; justify-content: space-between; align-items: center; background: #eadfcd; border-top: 1px solid #d9cdb9; color: #1d1a12; }
.shelf-side { flex: 1; display: flex; align-items: center; padding: 0 5px; }
.status { justify-content: flex-end; gap: 4px; }
.launcher { width: 31px; height: 31px; border-radius: 50%; display: grid; place-items: center; background: #f6f0ea; }
.apps { display: flex; gap: 21px; }
.app { position: relative; width: 30px; height: 30px; border-radius: 50%; box-shadow: 0 1px 3px rgba(0, 0, 0, .4); }
.run::after { content: ""; position: absolute; left: 11px; bottom: -5px; width: 8px; height: 2px; border-radius: 1px; background: #6d5f45; }
.now::after { left: 9px; width: 12px; background: #1d1a12; }
.sep::before { content: ""; position: absolute; left: -12px; top: 6px; width: 1px; height: 18px; background: #cfc4b2; }
.thumb { width: 60px; height: 30px; margin-right: 3px; border: 2px solid #f6f0ea; border-radius: 15px; overflow: hidden; }
.thumb svg { width: 100%; height: 100%; }
.pill { height: 32px; padding: 0 12px; display: flex; align-items: center; gap: 7px; border-radius: 4px; background: #f6f0ea; font-size: 12px; font-weight: 500; }
.pill.first { border-radius: 16px 4px 4px 16px; }
.pill.last { border-radius: 4px 16px 16px 4px; }
.badge { width: 15px; height: 15px; border-radius: 50%; background: #1d1a12; color: #f6f0ea; font-size: 10px; line-height: 15px; text-align: center; }
```
